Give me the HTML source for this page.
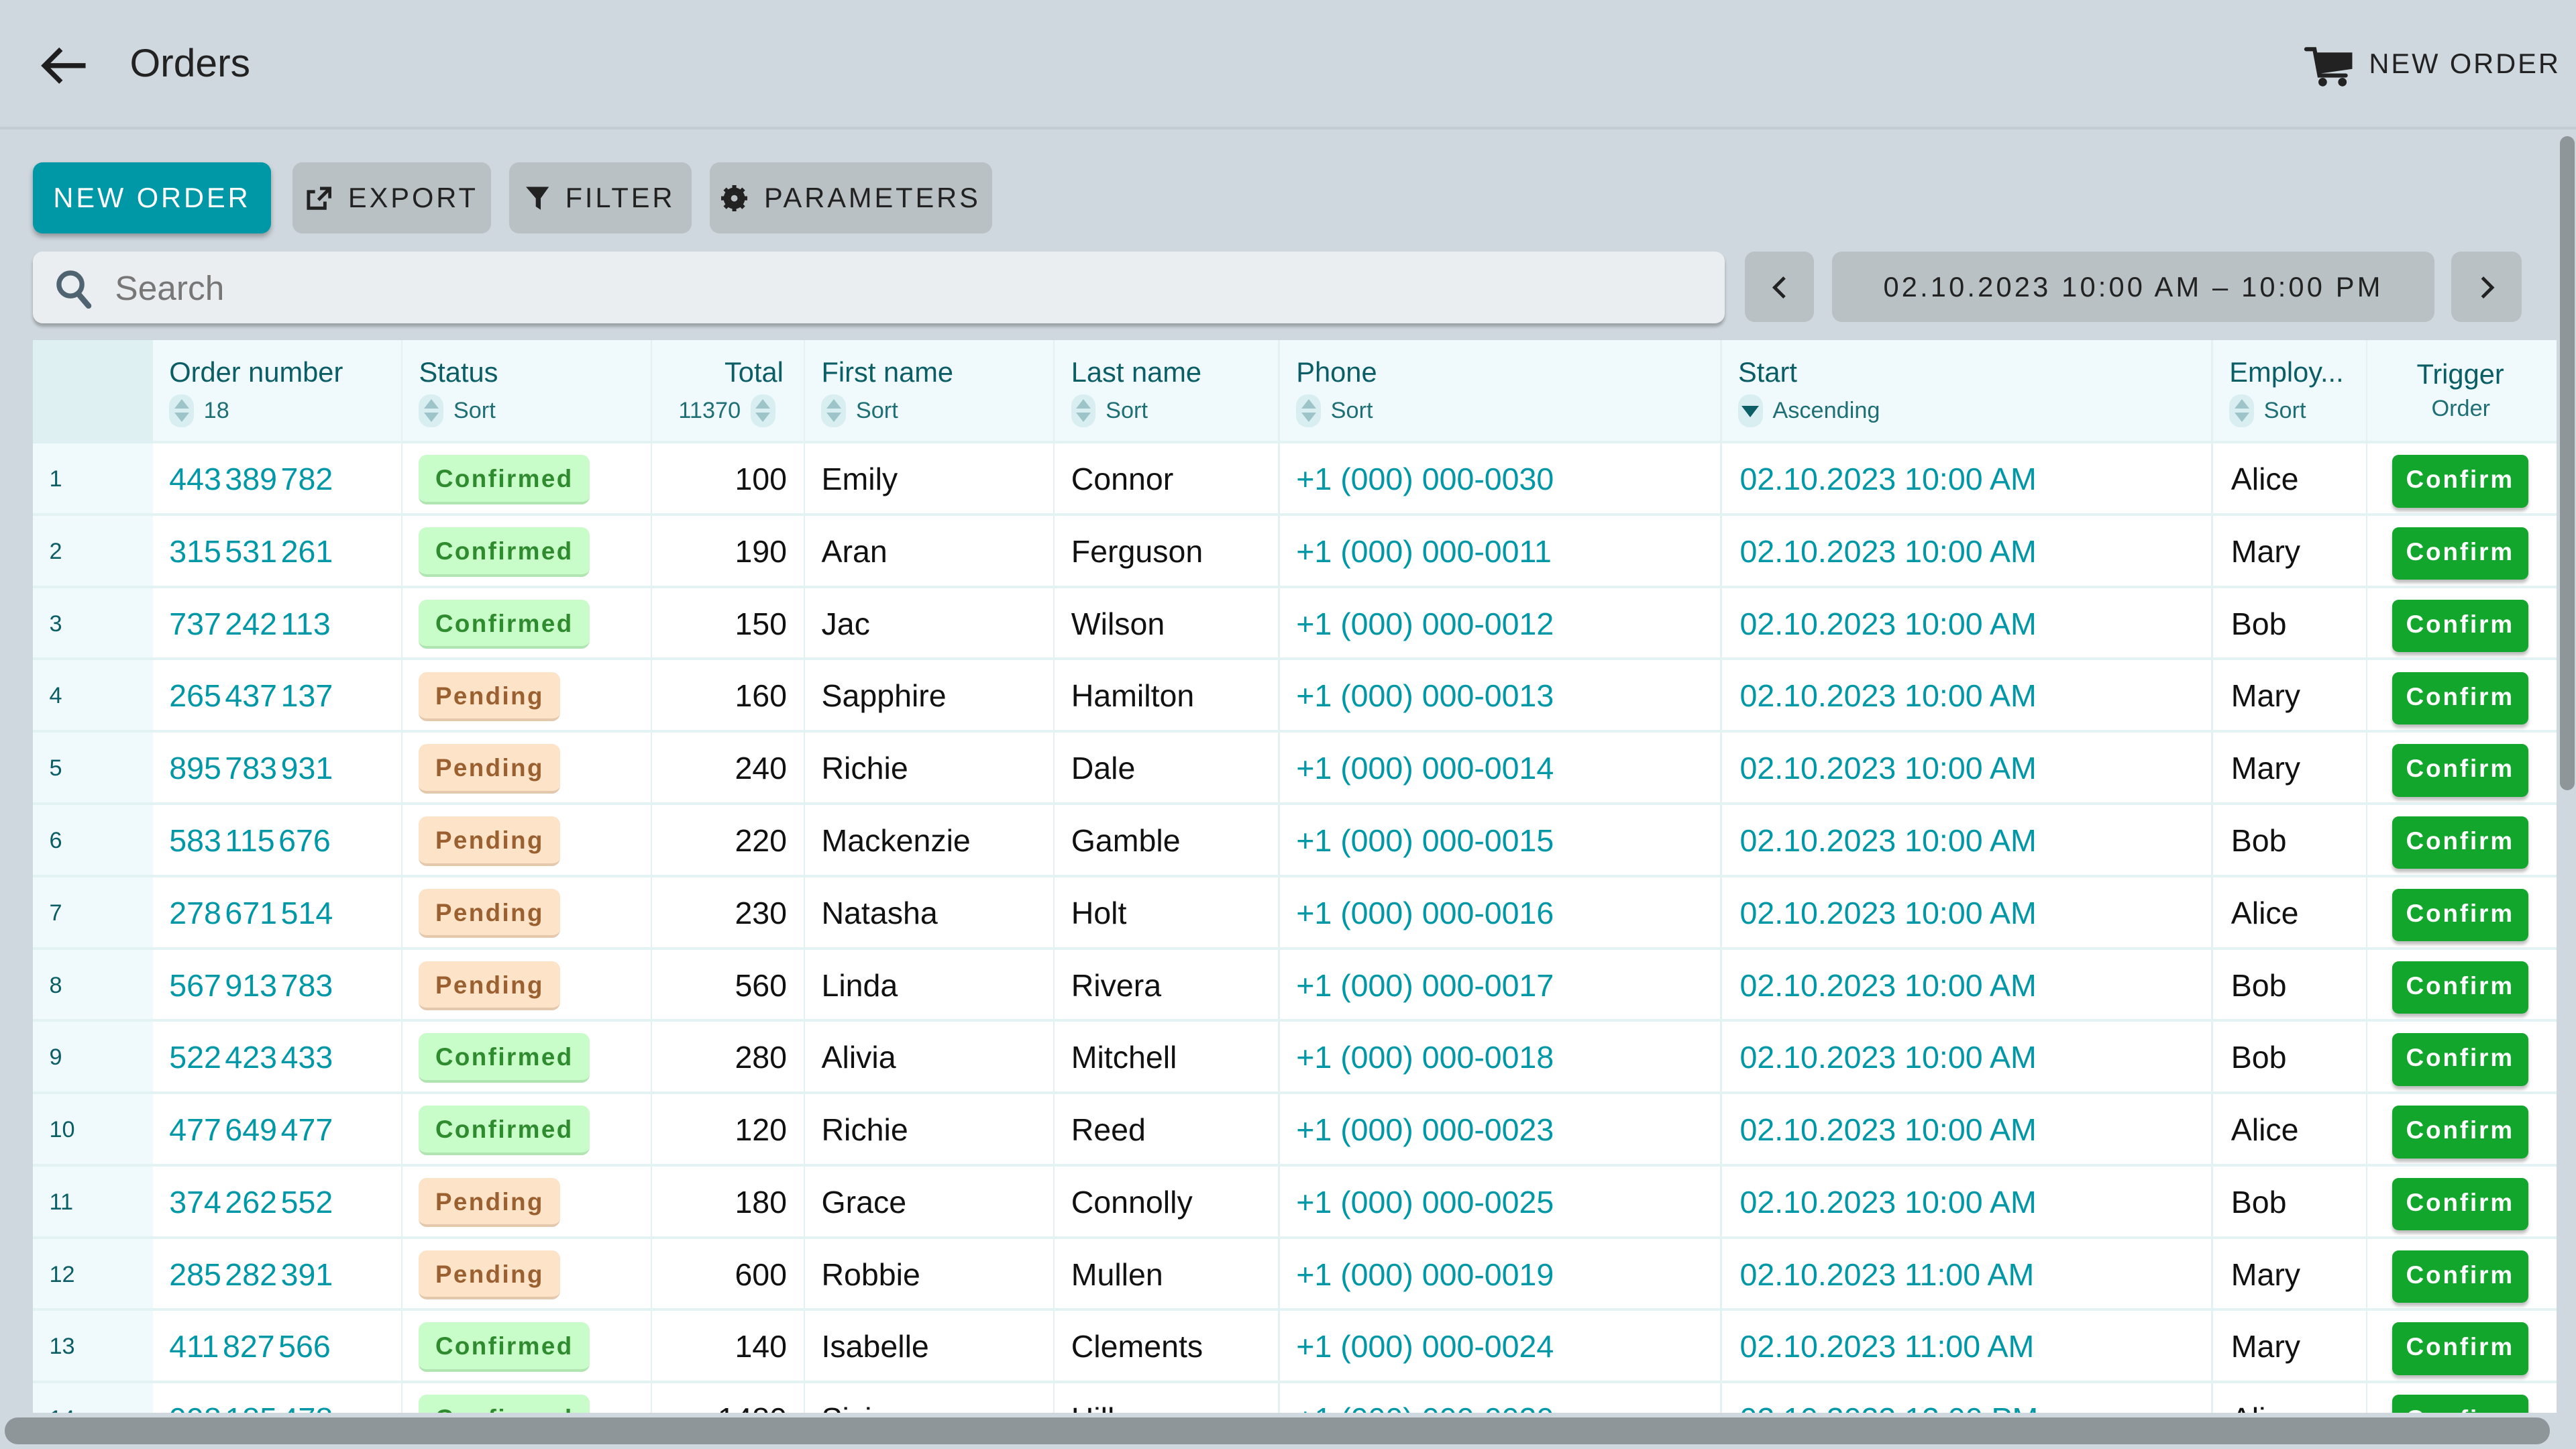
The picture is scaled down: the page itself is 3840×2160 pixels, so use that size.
<!DOCTYPE html>
<html><head><meta charset="utf-8"><style>
*{box-sizing:border-box;margin:0;padding:0}
html,body{width:3840px;height:2160px;overflow:hidden;background:#cfd8de}
#w{zoom:2.44898;width:1568px;height:882px;position:relative;font-family:"Liberation Sans",sans-serif;background:#cfd8de}
.a{position:absolute}
.hdr{left:0;top:0;width:1568px;height:79px;border-bottom:2px solid #c3ccd2}
.btn{top:99px;height:43px;border-radius:6px;background:#bac1c4;color:#222;font-size:17px;letter-spacing:1.6px;display:flex;align-items:center;justify-content:center;gap:10px}
.tbl{left:20px;top:207px;width:1536px;height:655px;background:#fff;overflow:hidden}
.row{position:absolute;left:0;width:1536px;height:44px;border-bottom:2px solid #e3f3f4;font-size:19px;color:#111}
.row>div{position:absolute;top:0;height:42px;line-height:44px;white-space:nowrap}
.idx{left:0;width:73px;background:#f0f9fb;color:#0b5e66;font-size:14px;padding-left:10px}
.vl{position:absolute;top:0;width:1px;height:655px;background:#e3f1f3}
.on{left:83px;color:#0097a7;word-spacing:-3px}
.ph,.st{color:#0097a7}
.badge{top:7px!important;height:30px!important;line-height:29px!important;border-radius:5px;font-size:15px;letter-spacing:1px;padding:0 10px;font-weight:bold}
.c{background:#c8fcc8;color:#2e8b2e;border-bottom:2px solid #b0e4b0}
.p{background:#fde3c8;color:#9a6030;border-bottom:2px solid #e4c8ac}
.cf{left:1436px;top:7px!important;width:83px;height:32px!important;line-height:30px!important;background:#12a72c;color:#fff;font-weight:bold;font-size:15px;letter-spacing:1.2px;text-align:center;border-radius:4px;box-shadow:0 2px 2px rgba(0,0,0,.25)}
.hd{color:#0b5e66;font-size:17px}
.sub{font-size:14px;color:#1f6f76;display:flex;align-items:center;gap:6px}
.si{width:15px;height:20px;border-radius:7px;background:#d8eef0;display:inline-block;position:relative}
.si:before{content:"";position:absolute;left:3px;top:3px;border:4.5px solid transparent;border-bottom:6px solid #9dc4c8;border-top:0}
.si:after{content:"";position:absolute;left:3px;top:11px;border:4.5px solid transparent;border-top:6px solid #9dc4c8;border-bottom:0}
.asc{width:15px;height:20px;border-radius:7px;background:#d8eef0;display:inline-block;position:relative}
.asc:after{content:"";position:absolute;left:2px;top:7px;border:5.5px solid transparent;border-top:7px solid #0b5e66;border-bottom:0}
</style></head><body><div id="w">
<div class="a hdr"></div>
<svg class="a" style="left:24px;top:27px" width="30" height="26" viewBox="0 0 30 26"><path d="M28 13H4M13 3L3 13l10 10" fill="none" stroke="#1e1e1e" stroke-width="3"/></svg>
<div class="a" style="left:79px;top:25px;font-size:24px;color:#222">Orders</div>
<svg class="a" style="left:1402px;top:27px" width="30" height="26" viewBox="0 0 30 26"><path d="M2 3h5l3 16h16" fill="none" stroke="#222" stroke-width="2.5" stroke-linecap="round"/><path d="M7 5h23v10l-21 3z" fill="#222"/><circle cx="12" cy="23" r="2.6" fill="#222"/><circle cx="24" cy="23" r="2.6" fill="#222"/></svg>
<div class="a" style="left:1442px;top:29px;font-size:17px;letter-spacing:1.2px;color:#222">NEW ORDER</div>

<div class="a btn" style="left:20px;width:145px;background:#0097a7;color:#fff;box-shadow:0 2px 3px rgba(0,0,0,.3)">NEW ORDER</div>
<div class="a btn" style="left:178px;width:121px"><svg width="16" height="16" viewBox="0 0 16 16"><path d="M9 2h6v6M15 2L8 9M12 10v4H2V4h4" fill="none" stroke="#222" stroke-width="2"/></svg>EXPORT</div>
<div class="a btn" style="left:310px;width:111px"><svg width="14" height="16" viewBox="0 0 14 16"><path d="M0 1h14L9 8v7L6 13V8z" fill="#222"/></svg>FILTER</div>
<div class="a btn" style="left:432px;width:172px"><svg width="16" height="16" viewBox="0 0 16 16"><circle cx="8" cy="8" r="5" fill="none" stroke="#222" stroke-width="3"/><path d="M8 0v16M0 8h16M2.3 2.3l11.4 11.4M13.7 2.3L2.3 13.7" stroke="#222" stroke-width="2.5"/><circle cx="8" cy="8" r="2" fill="#bac1c4"/></svg>PARAMETERS</div>

<div class="a" style="left:20px;top:153px;width:1030px;height:44px;background:#eaeef0;border-radius:6px;box-shadow:0 2px 2px rgba(0,0,0,.25)"></div>
<svg class="a" style="left:34px;top:164px" width="22" height="24" viewBox="0 0 22 24"><circle cx="9" cy="9" r="7" fill="none" stroke="#4f6470" stroke-width="3"/><path d="M14 15l6 7" stroke="#4f6470" stroke-width="3.5" stroke-linecap="round"/></svg>
<div class="a" style="left:70px;top:163px;font-size:21px;color:#777">Search</div>
<div class="a" style="left:1062px;top:153px;width:42px;height:43px;background:#bac1c4;border-radius:6px"><svg style="position:absolute;left:15px;top:14px" width="12" height="16" viewBox="0 0 12 16"><path d="M9 2L3 8l6 6" fill="none" stroke="#222" stroke-width="2"/></svg></div>
<div class="a" style="left:1115px;top:153px;width:367px;height:43px;background:#bac1c4;border-radius:6px;font-size:17px;letter-spacing:1.7px;text-align:center;line-height:43px;color:#222">02.10.2023 10:00 AM – 10:00 PM</div>
<div class="a" style="left:1492px;top:153px;width:43px;height:43px;background:#bac1c4;border-radius:6px"><svg style="position:absolute;left:16px;top:14px" width="12" height="16" viewBox="0 0 12 16"><path d="M3 2l6 6-6 6" fill="none" stroke="#222" stroke-width="2"/></svg></div>

<div class="a tbl">
<div class="a" style="left:0;top:0;width:1536px;height:63px;background:#f0f9fb;border-bottom:2px solid #e3f3f4"></div>
<div class="a" style="left:0;top:0;width:73px;height:655px;background:#f0f9fb"></div>
<div class="a" style="left:0;top:0;width:73px;height:63px;background:#dff0f2"></div>
<div class="vl" style="left:224px"></div><div class="vl" style="left:376px"></div><div class="vl" style="left:469px"></div><div class="vl" style="left:621px"></div><div class="vl" style="left:758px"></div><div class="vl" style="left:1027px"></div><div class="vl" style="left:1326px"></div><div class="vl" style="left:1420px"></div>
<div class="a hd" style="left:83px;top:10px">Order number</div><div class="a sub" style="left:83px;top:33px"><span class="si"></span>18</div>
<div class="a hd" style="left:421px;top:10px">Total</div><div class="a sub" style="left:393px;top:33px">11370<span class="si"></span></div>
<div class="a hd" style="left:235px;top:10px">Status</div><div class="a sub" style="left:235px;top:33px"><span class="si"></span>Sort</div>
<div class="a hd" style="left:480px;top:10px">First name</div><div class="a sub" style="left:480px;top:33px"><span class="si"></span>Sort</div>
<div class="a hd" style="left:632px;top:10px">Last name</div><div class="a sub" style="left:632px;top:33px"><span class="si"></span>Sort</div>
<div class="a hd" style="left:769px;top:10px">Phone</div><div class="a sub" style="left:769px;top:33px"><span class="si"></span>Sort</div>
<div class="a hd" style="left:1038px;top:10px">Start</div><div class="a sub" style="left:1038px;top:33px"><span class="asc"></span>Ascending</div>
<div class="a hd" style="left:1337px;top:10px">Employ...</div><div class="a sub" style="left:1337px;top:33px"><span class="si"></span>Sort</div>
<div class="a hd" style="left:1451px;top:11px">Trigger</div><div class="a sub" style="left:1460px;top:34px">Order</div>

<div class="row" style="top:63px"><div class="idx">1</div><div class="on">443 389 782</div><div class="badge c" style="left:235px">Confirmed</div><div style="right:1077px">100</div><div style="left:480px">Emily</div><div style="left:632px">Connor</div><div class="ph" style="left:769px">+1 (000) 000-0030</div><div class="st" style="left:1039px">02.10.2023 10:00 AM</div><div style="left:1338px">Alice</div><div class="cf">Confirm</div></div>
<div class="row" style="top:107px"><div class="idx">2</div><div class="on">315 531 261</div><div class="badge c" style="left:235px">Confirmed</div><div style="right:1077px">190</div><div style="left:480px">Aran</div><div style="left:632px">Ferguson</div><div class="ph" style="left:769px">+1 (000) 000-0011</div><div class="st" style="left:1039px">02.10.2023 10:00 AM</div><div style="left:1338px">Mary</div><div class="cf">Confirm</div></div>
<div class="row" style="top:151px"><div class="idx">3</div><div class="on">737 242 113</div><div class="badge c" style="left:235px">Confirmed</div><div style="right:1077px">150</div><div style="left:480px">Jac</div><div style="left:632px">Wilson</div><div class="ph" style="left:769px">+1 (000) 000-0012</div><div class="st" style="left:1039px">02.10.2023 10:00 AM</div><div style="left:1338px">Bob</div><div class="cf">Confirm</div></div>
<div class="row" style="top:195px"><div class="idx">4</div><div class="on">265 437 137</div><div class="badge p" style="left:235px">Pending</div><div style="right:1077px">160</div><div style="left:480px">Sapphire</div><div style="left:632px">Hamilton</div><div class="ph" style="left:769px">+1 (000) 000-0013</div><div class="st" style="left:1039px">02.10.2023 10:00 AM</div><div style="left:1338px">Mary</div><div class="cf">Confirm</div></div>
<div class="row" style="top:239px"><div class="idx">5</div><div class="on">895 783 931</div><div class="badge p" style="left:235px">Pending</div><div style="right:1077px">240</div><div style="left:480px">Richie</div><div style="left:632px">Dale</div><div class="ph" style="left:769px">+1 (000) 000-0014</div><div class="st" style="left:1039px">02.10.2023 10:00 AM</div><div style="left:1338px">Mary</div><div class="cf">Confirm</div></div>
<div class="row" style="top:283px"><div class="idx">6</div><div class="on">583 115 676</div><div class="badge p" style="left:235px">Pending</div><div style="right:1077px">220</div><div style="left:480px">Mackenzie</div><div style="left:632px">Gamble</div><div class="ph" style="left:769px">+1 (000) 000-0015</div><div class="st" style="left:1039px">02.10.2023 10:00 AM</div><div style="left:1338px">Bob</div><div class="cf">Confirm</div></div>
<div class="row" style="top:327px"><div class="idx">7</div><div class="on">278 671 514</div><div class="badge p" style="left:235px">Pending</div><div style="right:1077px">230</div><div style="left:480px">Natasha</div><div style="left:632px">Holt</div><div class="ph" style="left:769px">+1 (000) 000-0016</div><div class="st" style="left:1039px">02.10.2023 10:00 AM</div><div style="left:1338px">Alice</div><div class="cf">Confirm</div></div>
<div class="row" style="top:371px"><div class="idx">8</div><div class="on">567 913 783</div><div class="badge p" style="left:235px">Pending</div><div style="right:1077px">560</div><div style="left:480px">Linda</div><div style="left:632px">Rivera</div><div class="ph" style="left:769px">+1 (000) 000-0017</div><div class="st" style="left:1039px">02.10.2023 10:00 AM</div><div style="left:1338px">Bob</div><div class="cf">Confirm</div></div>
<div class="row" style="top:415px"><div class="idx">9</div><div class="on">522 423 433</div><div class="badge c" style="left:235px">Confirmed</div><div style="right:1077px">280</div><div style="left:480px">Alivia</div><div style="left:632px">Mitchell</div><div class="ph" style="left:769px">+1 (000) 000-0018</div><div class="st" style="left:1039px">02.10.2023 10:00 AM</div><div style="left:1338px">Bob</div><div class="cf">Confirm</div></div>
<div class="row" style="top:459px"><div class="idx">10</div><div class="on">477 649 477</div><div class="badge c" style="left:235px">Confirmed</div><div style="right:1077px">120</div><div style="left:480px">Richie</div><div style="left:632px">Reed</div><div class="ph" style="left:769px">+1 (000) 000-0023</div><div class="st" style="left:1039px">02.10.2023 10:00 AM</div><div style="left:1338px">Alice</div><div class="cf">Confirm</div></div>
<div class="row" style="top:503px"><div class="idx">11</div><div class="on">374 262 552</div><div class="badge p" style="left:235px">Pending</div><div style="right:1077px">180</div><div style="left:480px">Grace</div><div style="left:632px">Connolly</div><div class="ph" style="left:769px">+1 (000) 000-0025</div><div class="st" style="left:1039px">02.10.2023 10:00 AM</div><div style="left:1338px">Bob</div><div class="cf">Confirm</div></div>
<div class="row" style="top:547px"><div class="idx">12</div><div class="on">285 282 391</div><div class="badge p" style="left:235px">Pending</div><div style="right:1077px">600</div><div style="left:480px">Robbie</div><div style="left:632px">Mullen</div><div class="ph" style="left:769px">+1 (000) 000-0019</div><div class="st" style="left:1039px">02.10.2023 11:00 AM</div><div style="left:1338px">Mary</div><div class="cf">Confirm</div></div>
<div class="row" style="top:591px"><div class="idx">13</div><div class="on">411 827 566</div><div class="badge c" style="left:235px">Confirmed</div><div style="right:1077px">140</div><div style="left:480px">Isabelle</div><div style="left:632px">Clements</div><div class="ph" style="left:769px">+1 (000) 000-0024</div><div class="st" style="left:1039px">02.10.2023 11:00 AM</div><div style="left:1338px">Mary</div><div class="cf">Confirm</div></div>
<div class="row" style="top:635px"><div class="idx">14</div><div class="on">998 185 478</div><div class="badge c" style="left:235px">Confirmed</div><div style="right:1077px">1480</div><div style="left:480px">Sisi</div><div style="left:632px">Hill</div><div class="ph" style="left:769px">+1 (000) 000-0020</div><div class="st" style="left:1039px">02.10.2023 12:00 PM</div><div style="left:1338px">Alice</div><div class="cf">Confirm</div></div>
</div>
<div class="a" style="left:0;top:860px;width:1568px;height:22px;background:#cfd8de"></div>
<div class="a" style="left:3px;top:863px;width:1549px;height:16px;border-radius:8px;background:#8e9699"></div>
<div class="a" style="left:1558px;top:83px;width:9px;height:398px;border-radius:5px;background:#8e9699"></div>
</div></body></html>
